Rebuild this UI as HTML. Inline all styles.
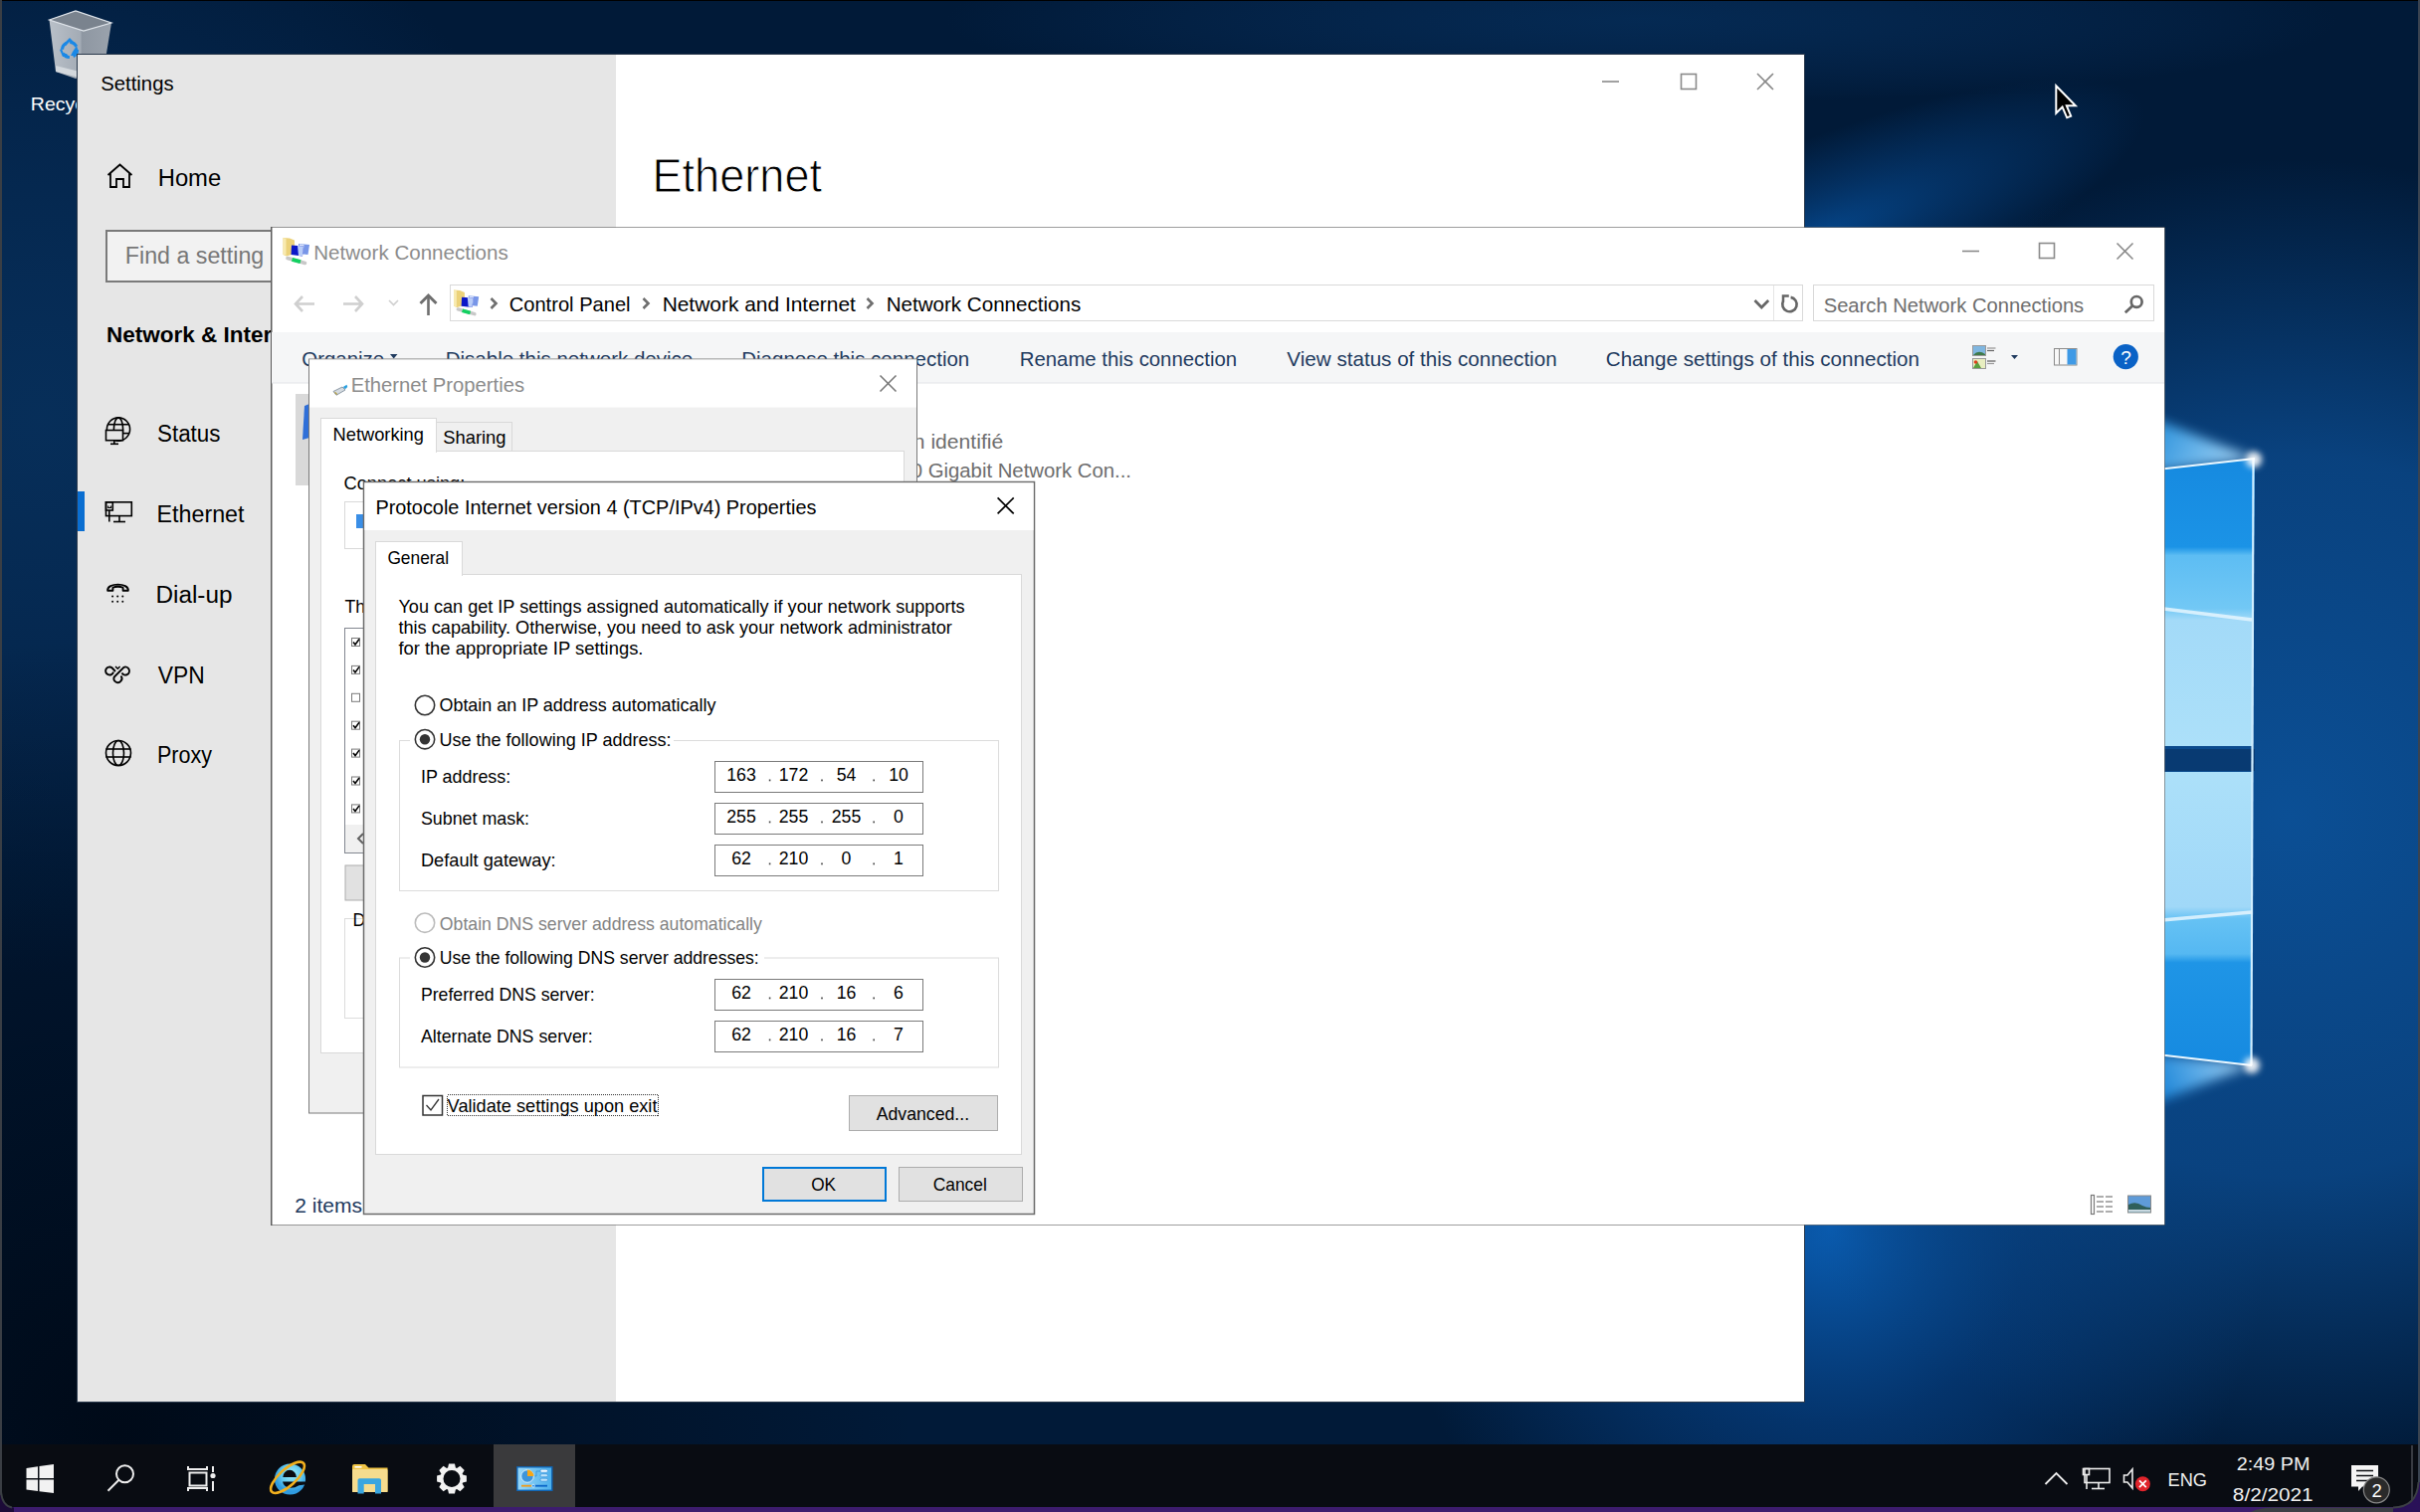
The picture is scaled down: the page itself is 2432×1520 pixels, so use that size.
<!DOCTYPE html>
<html><head><meta charset="utf-8"><title>Network settings</title>
<style>
html,body{margin:0;padding:0;width:2432px;height:1520px;overflow:hidden;background:#011a38;}
svg{position:absolute;left:0;top:0;display:block;}
text{font-family:"Liberation Sans",sans-serif;white-space:pre;}
</style></head><body>
<svg width="2432" height="1520" viewBox="0 0 2432 1520">
<defs>
 <radialGradient id="glow" cx="2300" cy="820" r="660" gradientUnits="userSpaceOnUse">
  <stop offset="0" stop-color="#0b4f95"/>
  <stop offset="0.55" stop-color="#0a4686" stop-opacity="0.9"/>
  <stop offset="1" stop-color="#0a4686" stop-opacity="0"/>
 </radialGradient>
 <radialGradient id="glowB" cx="1840" cy="1235" r="440" gradientUnits="userSpaceOnUse">
  <stop offset="0" stop-color="#0a5db2"/>
  <stop offset="0.45" stop-color="#053a78" stop-opacity="0.8"/>
  <stop offset="1" stop-color="#053a78" stop-opacity="0"/>
 </radialGradient>
 <radialGradient id="glowL" cx="40" cy="420" r="560" gradientUnits="userSpaceOnUse">
  <stop offset="0" stop-color="#08325f" stop-opacity="0.85"/>
  <stop offset="1" stop-color="#0a3c74" stop-opacity="0"/>
 </radialGradient>
 <radialGradient id="darkBL" cx="120" cy="1440" r="800" gradientUnits="userSpaceOnUse">
  <stop offset="0" stop-color="#000a18"/>
  <stop offset="1" stop-color="#000a18" stop-opacity="0"/>
 </radialGradient>
 <radialGradient id="glowT" cx="1650" cy="20" r="700" gradientUnits="userSpaceOnUse" gradientTransform="translate(0,18) scale(1,0.12)">
  <stop offset="0" stop-color="#06305e" stop-opacity="0.7"/>
  <stop offset="1" stop-color="#0b3a70" stop-opacity="0"/>
 </radialGradient>
 <radialGradient id="glowTR" cx="0" cy="0" r="1" gradientUnits="userSpaceOnUse" gradientTransform="translate(1820,240) rotate(-22) scale(360,95)">
  <stop offset="0" stop-color="#05468a"/>
  <stop offset="0.5" stop-color="#053a74" stop-opacity="0.6"/>
  <stop offset="1" stop-color="#053a74" stop-opacity="0"/>
 </radialGradient>
 <linearGradient id="beamTop" x1="2176" y1="420" x2="2266" y2="462" gradientUnits="userSpaceOnUse">
  <stop offset="0" stop-color="#3aa6f0" stop-opacity="0.85"/>
  <stop offset="1" stop-color="#bfe6ff" stop-opacity="0.95"/>
 </linearGradient>
 <linearGradient id="beamBot" x1="2176" y1="1100" x2="2263" y2="1071" gradientUnits="userSpaceOnUse">
  <stop offset="0" stop-color="#2a9cf0" stop-opacity="0.8"/>
  <stop offset="1" stop-color="#bfe6ff" stop-opacity="0.95"/>
 </linearGradient>
 <linearGradient id="paneTop" x1="0" y1="462" x2="0" y2="750" gradientUnits="userSpaceOnUse">
  <stop offset="0" stop-color="#168ae0"/>
  <stop offset="0.305" stop-color="#1b93e6"/>
  <stop offset="0.335" stop-color="#5dbdf3"/>
  <stop offset="0.52" stop-color="#72c8f5"/>
  <stop offset="0.56" stop-color="#a3daf8"/>
  <stop offset="1" stop-color="#ace0f9"/>
 </linearGradient>
 <linearGradient id="paneBot" x1="0" y1="776" x2="0" y2="1071" gradientUnits="userSpaceOnUse">
  <stop offset="0" stop-color="#ace0f9"/>
  <stop offset="0.46" stop-color="#a0d8f8"/>
  <stop offset="0.5" stop-color="#66c2f4"/>
  <stop offset="0.62" stop-color="#55b8f2"/>
  <stop offset="0.65" stop-color="#1f95e6"/>
  <stop offset="1" stop-color="#168ae0"/>
 </linearGradient>
 <filter id="blur6" x="-50%" y="-50%" width="200%" height="200%"><feGaussianBlur stdDeviation="6"/></filter>
 <filter id="blur3" x="-50%" y="-50%" width="200%" height="200%"><feGaussianBlur stdDeviation="3"/></filter>
</defs>

<rect x="0" y="0" width="2432" height="1520" fill="#011a38" />
<rect x="0" y="0" width="2432" height="1520" fill="url(#glowL)" />
<rect x="0" y="0" width="2432" height="1520" fill="url(#glowT)" />
<rect x="0" y="0" width="2432" height="1520" fill="url(#darkBL)" />
<rect x="0" y="0" width="2432" height="1520" fill="url(#glowB)" />
<rect x="0" y="0" width="2432" height="1520" fill="url(#glow)" />
<rect x="0" y="0" width="2432" height="1520" fill="url(#glowTR)" />
<polygon points="2150,415 2266,461 2150,476" fill="url(#beamTop)" filter="url(#blur6)"/>
<polygon points="2150,1058 2263,1071 2150,1115" fill="url(#beamBot)" filter="url(#blur6)"/>
<polygon points="2150,474 2266,461 2263,750 2150,750" fill="url(#paneTop)"/>
<polygon points="2150,776 2263,776 2263,1071 2150,1058" fill="url(#paneBot)"/>
<rect x="2150" y="753" width="116" height="22" fill="#083a72"/>
<line x1="2150" y1="474" x2="2266" y2="461" stroke="#eaf7ff" stroke-width="2.2"/>
<line x1="2264.5" y1="462" x2="2262.5" y2="1071" stroke="#d0eeff" stroke-width="2.2"/>
<line x1="2150" y1="1058" x2="2263" y2="1071" stroke="#eaf7ff" stroke-width="2.2"/>
<line x1="2150" y1="609" x2="2263" y2="623" stroke="#e6f6ff" stroke-width="3.5" opacity="0.85"/>
<line x1="2150" y1="927" x2="2263" y2="917" stroke="#e6f6ff" stroke-width="3.5" opacity="0.85"/>
<circle cx="2265" cy="462" r="8" fill="#ffffff" opacity="0.9" filter="url(#blur3)"/>
<circle cx="2263" cy="1071" r="8" fill="#ffffff" opacity="0.9" filter="url(#blur3)"/>
<defs><linearGradient id="binb" x1="50" y1="0" x2="112" y2="0" gradientUnits="userSpaceOnUse"><stop offset="0" stop-color="#b9c0c8"/><stop offset="0.5" stop-color="#a3abb5"/><stop offset="0.52" stop-color="#8e97a2"/><stop offset="1" stop-color="#9aa2ac"/></linearGradient></defs>
<polygon points="49.5,20 76,11 112,23 104,72 76,79 56,72" fill="url(#binb)"/>
<polygon points="49.5,20 76,11 112,23 84,31" fill="#7a838e" stroke="#dfe4ea" stroke-width="1.2"/>
<polygon points="56,66 84,73 104,66 104,72 84,79 56,72" fill="#d3d8dd"/>
<g fill="#1a88e6"><path d="M64,44 L70,38 L76,44 L72,44 L70,42 L66,46 Z"/><path d="M60,50 L63,57 L69,57 L67,54 L64,54 L62,49 Z"/><path d="M73,52 L77,46 L79,52 L77,51 L74,56 L71,56 Z"/></g>
<circle cx="70" cy="50" r="7.5" fill="none" stroke="#1a88e6" stroke-width="3.2" stroke-dasharray="8 3.8"/>
<text x="30.89" y="111" font-size="18.5" fill="#ffffff" textLength="54.22" lengthAdjust="spacingAndGlyphs" >Recyc</text>
<rect x="77" y="54" width="1737" height="1356" fill="#2b3a4d" />
<rect x="78" y="55" width="541" height="1354" fill="#e6e6e6" />
<rect x="619" y="55" width="1194" height="1354" fill="#ffffff" />
<text x="101.34" y="91.3" font-size="21" fill="#000" textLength="73.22" lengthAdjust="spacingAndGlyphs" >Settings</text>
<g stroke="#8a8a8a" stroke-width="1.6" fill="none"><line x1="1610" y1="82" x2="1627" y2="82"/><rect x="1689.5" y="74.5" width="15" height="15"/><line x1="1766" y1="74" x2="1782" y2="90"/><line x1="1782" y1="74" x2="1766" y2="90"/></g>
<g fill="none" stroke="#000" stroke-width="1.8"><path d="M108.5,176 L120.5,165.5 L132.5,176 M111,173.5 V188 H117 V180 H124 V188 H130 V173.5"/></g>
<text x="158.7" y="186.8" font-size="23.3" fill="#000" textLength="63.5" lengthAdjust="spacingAndGlyphs" >Home</text>
<rect x="107" y="232" width="300" height="51" fill="#f2f2f2" stroke="#7a7a7a" stroke-width="2" />
<text x="125.8" y="264.8" font-size="23" fill="#777" textLength="139.5" lengthAdjust="spacingAndGlyphs" >Find a setting</text>
<text x="106.9" y="344.4" font-size="22.5" fill="#000" font-weight="bold" >Network &amp; Internet</text>
<g fill="none" stroke="#000" stroke-width="1.6"><circle cx="119" cy="431.5" r="11.6"/><ellipse cx="119" cy="431.5" rx="4.6" ry="11.6"/><line x1="108" y1="426.7" x2="130" y2="426.7"/><line x1="123" y1="435.6" x2="130" y2="435.6"/><rect x="106.5" y="432.5" width="17" height="10.2" fill="#e6e6e6"/><line x1="114.8" y1="442.7" x2="114.8" y2="446"/><line x1="111" y1="446.3" x2="119" y2="446.3"/><rect x="106.5" y="504.8" width="25.8" height="13.8"/><rect x="106.5" y="504.8" width="6.8" height="8.2"/><line x1="109.8" y1="513" x2="109.8" y2="524.5"/><path d="M108.8,508.5 V510.5 H111.5 V508.5" stroke-width="1.2"/><line x1="120" y1="519" x2="120" y2="524"/><line x1="114" y1="524.5" x2="126" y2="524.5"/><path d="M108.2,593.8 C107,585.5 130,585.5 128.8,593.8 H123.6 V590.8 C121,589.3 116,589.3 113.4,590.8 V593.8 Z" stroke-width="1.9" stroke-linejoin="round"/><path d="M114,675.5 A4,4 0 1,1 112.5,671.3 L116,675" stroke-width="1.9"/><path d="M122.5,676.5 A4,4 0 1,0 124.5,670.8 L114.8,680.5 A4,4 0 1,0 121.5,679.5" stroke-width="1.9"/><path d="M116,670 L118.3,672.2 L120.6,670" stroke-width="1.5"/><circle cx="119" cy="757" r="12.5"/><ellipse cx="119" cy="757" rx="5.5" ry="12.5"/><line x1="106.5" y1="753" x2="131.5" y2="753"/><line x1="106.5" y1="761" x2="131.5" y2="761"/></g>
<g fill="#000"><circle cx="113.1" cy="599.6" r="1"/><circle cx="118.2" cy="599.6" r="1"/><circle cx="123.3" cy="599.6" r="1"/><circle cx="113.1" cy="604.8" r="1"/><circle cx="118.2" cy="604.8" r="1"/><circle cx="123.3" cy="604.8" r="1"/></g>
<rect x="78" y="494" width="7" height="40" fill="#0a6ed1" />
<text x="158" y="443.8" font-size="23" fill="#000" textLength="63.5" lengthAdjust="spacingAndGlyphs" >Status</text>
<text x="157.5" y="525" font-size="23" fill="#000" textLength="88" lengthAdjust="spacingAndGlyphs" >Ethernet</text>
<text x="156.5" y="605.5" font-size="23" fill="#000" textLength="77" lengthAdjust="spacingAndGlyphs" >Dial-up</text>
<text x="158.7" y="686.5" font-size="23" fill="#000" textLength="47" lengthAdjust="spacingAndGlyphs" >VPN</text>
<text x="158" y="767.3" font-size="23" fill="#000" textLength="55" lengthAdjust="spacingAndGlyphs" >Proxy</text>
<text x="655.5" y="192.6" font-size="48.5" fill="#000" textLength="170.5" lengthAdjust="spacingAndGlyphs" stroke="#fff" stroke-width="0.9">Ethernet</text>
<rect x="272.5" y="228.5" width="1903" height="1003" fill="#ffffff" stroke="rgba(0,0,0,0.38)" stroke-width="1" />
<rect x="272" y="228" width="1.5" height="1004" fill="#5a5a5a" />
<g transform="translate(284.5,239) scale(1.0)"><path d="M0,0 L6.5,0.5 L11.5,2.5 V16 L3.5,18.5 L0,17 Z" fill="#ecd27a"/><path d="M0,0 L3,0.8 V17.5 L0,17 Z" fill="#f8eab0"/><path d="M15.5,6 L26.5,7 L25,17 L15.5,16 Z" fill="#7896e8"/><path d="M16.5,6.5 L21,7 L20,15 L16.5,14.5 Z" fill="#dfe8fb"/><path d="M8.5,7.5 L20.5,8.5 L19.5,18.5 L8,17 Z" fill="#0b18c8"/><path d="M14.5,8 L20.5,8.5 L19.5,18.5 L15.5,18 Z" fill="#b9cdf8"/><path d="M4.5,20.5 L22,25.5" stroke="#c8c8c8" stroke-width="3.6" stroke-linecap="round"/><path d="M9,21.8 L17.5,24.2" stroke="#12d060" stroke-width="4"/></g>
<text x="315.28" y="260.9" font-size="20.3" fill="#8c8c8c" textLength="195.44" lengthAdjust="spacingAndGlyphs" >Network Connections</text>
<g stroke="#8a8a8a" stroke-width="1.6" fill="none"><line x1="1972" y1="252.5" x2="1989" y2="252.5"/><rect x="2049.5" y="244.5" width="15" height="15"/><line x1="2127.5" y1="244.5" x2="2143.5" y2="260.5"/><line x1="2143.5" y1="244.5" x2="2127.5" y2="260.5"/></g>
<g fill="none" stroke="#cfcfcf" stroke-width="2.6"><path d="M297,305.5 H316 M304,298 L297,305.5 L304,313"/><path d="M345,305.5 H364 M357,298 L364,305.5 L357,313"/><path d="M391,302 L395.5,306.5 L400,302" stroke-width="1.6"/></g>
<g fill="none" stroke="#6e6e6e" stroke-width="3"><path d="M430.5,317 V299" stroke-width="2.6"/><path d="M422.5,305 L430.5,297 L438.5,305"/></g>
<rect x="452.5" y="286.5" width="1359" height="36" fill="#ffffff" stroke="#d9d9d9" stroke-width="1" />
<line x1="1782.5" y1="287" x2="1782.5" y2="322" stroke="#e5e5e5"/>
<g transform="translate(456,291.5) scale(0.95)"><path d="M0,0 L6.5,0.5 L11.5,2.5 V16 L3.5,18.5 L0,17 Z" fill="#ecd27a"/><path d="M0,0 L3,0.8 V17.5 L0,17 Z" fill="#f8eab0"/><path d="M15.5,6 L26.5,7 L25,17 L15.5,16 Z" fill="#7896e8"/><path d="M16.5,6.5 L21,7 L20,15 L16.5,14.5 Z" fill="#dfe8fb"/><path d="M8.5,7.5 L20.5,8.5 L19.5,18.5 L8,17 Z" fill="#0b18c8"/><path d="M14.5,8 L20.5,8.5 L19.5,18.5 L15.5,18 Z" fill="#b9cdf8"/><path d="M4.5,20.5 L22,25.5" stroke="#c8c8c8" stroke-width="3.6" stroke-linecap="round"/><path d="M9,21.8 L17.5,24.2" stroke="#12d060" stroke-width="4"/></g>
<g fill="none" stroke="#6e6e6e" stroke-width="2"><path d="M493.5,300 L498.5,305 L493.5,310" stroke-width="2.6"/><path d="M646.5,300 L651.5,305 L646.5,310" stroke-width="2.6"/><path d="M871.5,300 L876.5,305 L871.5,310" stroke-width="2.6"/><path d="M1763.5,302 L1770.3,309 L1777.2,302" stroke="#666" stroke-width="2.7"/></g>
<path d="M1799.6,298.9 A7.2,7.2 0 1,1 1792.2,302.4" fill="none" stroke="#666" stroke-width="2.6"/><path d="M1792,303.2 V297.4 H1797.8" fill="none" stroke="#666" stroke-width="2.5"/>
<text x="511.74" y="312.7" font-size="21" fill="#000" textLength="121.82" lengthAdjust="spacingAndGlyphs" >Control Panel</text>
<text x="665.64" y="312.7" font-size="21" fill="#000" textLength="194.22" lengthAdjust="spacingAndGlyphs" >Network and Internet</text>
<text x="890.64" y="312.7" font-size="21" fill="#000" textLength="195.62" lengthAdjust="spacingAndGlyphs" >Network Connections</text>
<rect x="1822.5" y="286.5" width="342" height="36" fill="#ffffff" stroke="#d9d9d9" stroke-width="1" />
<text x="1832.67" y="314" font-size="20.5" fill="#6d6d6d" textLength="261.56" lengthAdjust="spacingAndGlyphs" >Search Network Connections</text>
<g fill="none" stroke="#666" stroke-width="2.7"><circle cx="2147.2" cy="303.4" r="5.4"/><line x1="2143.3" y1="307.3" x2="2135.8" y2="314.3"/></g>
<rect x="273" y="334" width="1902" height="51" fill="#f5f6f7" />
<line x1="273" y1="385" x2="2175" y2="385" stroke="#e3e5e8"/>
<text x="303.25" y="367.7" font-size="20.8" fill="#1e3a5e" textLength="82.9" lengthAdjust="spacingAndGlyphs" >Organize</text>
<path d="M392,356 L399.5,356 L395.7,360.5 Z" fill="#1e3a5e"/>
<text x="447.75" y="367.7" font-size="20.8" fill="#1e3a5e" textLength="248.5" lengthAdjust="spacingAndGlyphs" >Disable this network device</text>
<text x="745.25" y="367.7" font-size="20.8" fill="#1e3a5e" textLength="229.0" lengthAdjust="spacingAndGlyphs" >Diagnose this connection</text>
<text x="1024.75" y="367.7" font-size="20.8" fill="#1e3a5e" textLength="218.3" lengthAdjust="spacingAndGlyphs" >Rename this connection</text>
<text x="1293.35" y="367.7" font-size="20.8" fill="#1e3a5e" textLength="271.3" lengthAdjust="spacingAndGlyphs" >View status of this connection</text>
<text x="1613.75" y="367.7" font-size="20.8" fill="#1e3a5e" textLength="315.3" lengthAdjust="spacingAndGlyphs" >Change settings of this connection</text>
<g><rect x="1982.5" y="347.5" width="13" height="10" fill="#7fb6e0" stroke="#9a9a9a" stroke-width="1"/><path d="M1983,357 Q1988,351 1995,356 V357 H1983 Z" fill="#3f7a4a"/><rect x="1982.5" y="360.5" width="13" height="10" fill="#e8eec0" stroke="#9a9a9a" stroke-width="1"/><path d="M1983,370 L1987,363 L1991,370 Z" fill="#5aa040"/><circle cx="1985.5" cy="364" r="1.8" fill="#e04020"/><line x1="1997" y1="350" x2="2005.5" y2="350" stroke="#9a9a9a" stroke-width="1.3"/><line x1="1997" y1="352.5" x2="2004" y2="352.5" stroke="#666" stroke-width="1.2"/><line x1="1997" y1="363" x2="2005.5" y2="363" stroke="#666" stroke-width="1.3"/><line x1="1997" y1="365.5" x2="2004" y2="365.5" stroke="#9a9a9a" stroke-width="1.2"/><path d="M2021,357 L2028,357 L2024.5,361 Z" fill="#1e3a5e"/><rect x="2064.5" y="350.5" width="22.5" height="16.5" fill="#f8f8f8" stroke="#8a8a8a"/><rect x="2077.5" y="351" width="9" height="15.5" fill="#3f9ae6"/><line x1="2069.5" y1="351" x2="2069.5" y2="366.5" stroke="#8a8a8a"/><circle cx="2136.3" cy="358.6" r="12.6" fill="#0a62c6"/></g>
<text x="2136.5" y="366" font-size="19" fill="#fff" text-anchor="middle" >?</text>
<rect x="297" y="396" width="14" height="92" fill="#d9d9d9" />
<path d="M306,408 L311,406 L311,440 L304,442 Z" fill="#2f6fd8"/>
<text x="917.77" y="450.5" font-size="20.5" fill="#6d6d6d" textLength="90.46" lengthAdjust="spacingAndGlyphs" >n identifié</text>
<text x="915.77" y="479.5" font-size="20.5" fill="#6d6d6d" textLength="221.26" lengthAdjust="spacingAndGlyphs" >0 Gigabit Network Con...</text>
<text x="296.2" y="1219" font-size="20" fill="#1e3a5e" textLength="67.8" lengthAdjust="spacingAndGlyphs" >2 items</text>
<g stroke="#777" stroke-width="1.2" fill="none"><rect x="2101.5" y="1201.5" width="3" height="19"/><line x1="2107" y1="1203" x2="2114" y2="1203"/><line x1="2116" y1="1203" x2="2123" y2="1203"/><line x1="2107" y1="1208" x2="2114" y2="1208"/><line x1="2116" y1="1208" x2="2123" y2="1208"/><line x1="2107" y1="1213" x2="2114" y2="1213"/><line x1="2116" y1="1213" x2="2123" y2="1213"/><line x1="2107" y1="1218" x2="2114" y2="1218"/><line x1="2116" y1="1218" x2="2123" y2="1218"/></g>
<rect x="2138.5" y="1202" width="23" height="17" fill="#5f9bd8" stroke="#8a8a8a"/><path d="M2139,1211 Q2146,1207 2153,1212 Q2157,1214 2161,1214 V1218.5 H2139 Z" fill="#2f5f5a"/><rect x="2139" y="1216" width="22" height="2.5" fill="#c8d8e0"/>
<rect x="310.5" y="361" width="611" height="758" fill="#f0f0f0" stroke="#7a7a7a" stroke-width="1" />
<rect x="311" y="361.5" width="610" height="48" fill="#ffffff" />
<g transform="translate(335,387.5) scale(0.75)"><path d="M0,8 L12,2 L16,6 L4,13 Z" fill="#d5dbe0" stroke="#6c7c8c" stroke-width="1"/><path d="M2,9 L5,12" stroke="#b8a040" stroke-width="1.5"/><path d="M13,2 L18,-1 L19,2 L16,5 Z" fill="#2aa0e0"/></g>
<text x="352.78" y="393.6" font-size="20.4" fill="#8c8c8c" textLength="174.25" lengthAdjust="spacingAndGlyphs" >Ethernet Properties</text>
<g stroke="#777" stroke-width="1.6"><line x1="884.5" y1="377.5" x2="900.5" y2="393.5"/><line x1="900.5" y1="377.5" x2="884.5" y2="393.5"/></g>
<rect x="322.5" y="453.5" width="586" height="605" fill="#ffffff" stroke="#d9d9d9" stroke-width="1" />
<rect x="438.5" y="424.5" width="76" height="29" fill="#f0f0f0" stroke="#d9d9d9" stroke-width="1" />
<rect x="322.5" y="420.5" width="116" height="34" fill="#ffffff" stroke="#d9d9d9" stroke-width="1" />
<rect x="323" y="452" width="115" height="4" fill="#ffffff" />
<text x="334.54" y="443" font-size="17.7" fill="#000" textLength="91.42" lengthAdjust="spacingAndGlyphs" >Networking</text>
<text x="445.24" y="445.6" font-size="17.7" fill="#000" textLength="63.32" lengthAdjust="spacingAndGlyphs" >Sharing</text>
<text x="345.54" y="491.8" font-size="17.7" fill="#000" textLength="121.82" lengthAdjust="spacingAndGlyphs" >Connect using:</text>
<rect x="346.5" y="504.5" width="540" height="47" fill="#ffffff" stroke="#d9d9d9" stroke-width="1" />
<rect x="358" y="517" width="10" height="14" fill="#3a8ee6"/>
<text x="346.5" y="616.2" font-size="17.7" fill="#000" >This connection uses the following items:</text>
<rect x="346.5" y="631.5" width="540" height="226" fill="#ffffff" stroke="#828790" stroke-width="1" />
<rect x="353.5" y="641.5" width="8" height="8" fill="#ffffff" stroke="#7a7a7a" stroke-width="1" />
<path d="M355,645.5 L357,648.0 L361,642.5" fill="none" stroke="#000" stroke-width="1.6"/>
<rect x="353.5" y="669.4" width="8" height="8" fill="#ffffff" stroke="#7a7a7a" stroke-width="1" />
<path d="M355,673.4 L357,675.9 L361,670.4" fill="none" stroke="#000" stroke-width="1.6"/>
<rect x="353.5" y="697.3" width="8" height="8" fill="#ffffff" stroke="#7a7a7a" stroke-width="1" />
<rect x="353.5" y="725.2" width="8" height="8" fill="#ffffff" stroke="#7a7a7a" stroke-width="1" />
<path d="M355,729.2 L357,731.7 L361,726.2" fill="none" stroke="#000" stroke-width="1.6"/>
<rect x="353.5" y="753.1" width="8" height="8" fill="#ffffff" stroke="#7a7a7a" stroke-width="1" />
<path d="M355,757.1 L357,759.6 L361,754.1" fill="none" stroke="#000" stroke-width="1.6"/>
<rect x="353.5" y="781.0" width="8" height="8" fill="#ffffff" stroke="#7a7a7a" stroke-width="1" />
<path d="M355,785.0 L357,787.5 L361,782.0" fill="none" stroke="#000" stroke-width="1.6"/>
<rect x="353.5" y="808.9" width="8" height="8" fill="#ffffff" stroke="#7a7a7a" stroke-width="1" />
<path d="M355,812.9 L357,815.4 L361,809.9" fill="none" stroke="#000" stroke-width="1.6"/>
<rect x="347" y="829" width="539" height="28" fill="#f0f0f0" />
<path d="M365,838 L360,843 L365,848" fill="none" stroke="#606060" stroke-width="2"/>
<rect x="347" y="870" width="120" height="35" fill="#e1e1e1" stroke="#adadad" stroke-width="1" />
<rect x="346.5" y="923.5" width="540" height="100" fill="none" stroke="#dcdcdc" stroke-width="1" />
<text x="354.5" y="931" font-size="17.7" fill="#000" >Description</text>
<rect x="365.5" y="484.5" width="674" height="736" fill="#f0f0f0" stroke="#6b6b6b" stroke-width="1.5" />
<rect x="366.5" y="485.5" width="672" height="47.5" fill="#ffffff" />
<text x="377.38" y="517" font-size="20.4" fill="#000" textLength="443.05" lengthAdjust="spacingAndGlyphs" >Protocole Internet version 4 (TCP/IPv4) Properties</text>
<g stroke="#000" stroke-width="1.7"><line x1="1002.6" y1="500.4" x2="1018.7" y2="516.4"/><line x1="1018.7" y1="500.4" x2="1002.6" y2="516.4"/></g>
<rect x="377.5" y="577.5" width="649" height="583" fill="#ffffff" stroke="#d9d9d9" stroke-width="1" />
<rect x="377.5" y="544.5" width="87" height="34" fill="#ffffff" stroke="#d9d9d9" stroke-width="1" />
<rect x="378" y="576" width="86" height="3" fill="#ffffff" />
<text x="389.39" y="566.6" font-size="18.5" fill="#000" textLength="61.72" lengthAdjust="spacingAndGlyphs" >General</text>
<text x="400.44" y="616.2" font-size="17.7" fill="#000" textLength="569.12" lengthAdjust="spacingAndGlyphs" >You can get IP settings assigned automatically if your network supports</text>
<text x="400.44" y="637.25" font-size="17.7" fill="#000" textLength="556.42" lengthAdjust="spacingAndGlyphs" >this capability. Otherwise, you need to ask your network administrator</text>
<text x="400.44" y="658.3000000000001" font-size="17.7" fill="#000" textLength="246.02" lengthAdjust="spacingAndGlyphs" >for the appropriate IP settings.</text>
<rect x="401.5" y="744.5" width="602" height="151" fill="none" stroke="#dcdcdc" stroke-width="1" />
<rect x="412" y="736" width="265" height="16" fill="#ffffff" />
<circle cx="427" cy="709" r="9.7" fill="#fff" stroke="#333" stroke-width="1.6"/>
<text x="441.44" y="715.4" font-size="17.7" fill="#000" textLength="278.02" lengthAdjust="spacingAndGlyphs" >Obtain an IP address automatically</text>
<circle cx="427" cy="743.2" r="9.7" fill="#fff" stroke="#333" stroke-width="1.6"/>
<circle cx="427" cy="743.2" r="5.2" fill="#333"/>
<text x="441.44" y="749.7" font-size="17.7" fill="#000" textLength="233.12" lengthAdjust="spacingAndGlyphs" >Use the following IP address:</text>
<rect x="718.5" y="765.5" width="209" height="31" fill="#ffffff" stroke="#7a7a7a" stroke-width="1" />
<text x="422.94" y="787.2" font-size="17.7" fill="#000" textLength="90.32" lengthAdjust="spacingAndGlyphs" >IP address:</text>
<text x="745" y="785.2" font-size="17.7" fill="#000" text-anchor="middle" >163</text>
<text x="797.5" y="785.2" font-size="17.7" fill="#000" text-anchor="middle" >172</text>
<text x="850.5" y="785.2" font-size="17.7" fill="#000" text-anchor="middle" >54</text>
<text x="903" y="785.2" font-size="17.7" fill="#000" text-anchor="middle" >10</text>
<rect x="772.8000000000001" y="783.5" width="1.6" height="1.8" fill="#444" />
<rect x="825.2" y="783.5" width="1.6" height="1.8" fill="#444" />
<rect x="877.4000000000001" y="783.5" width="1.6" height="1.8" fill="#444" />
<rect x="718.5" y="807.5" width="209" height="31" fill="#ffffff" stroke="#7a7a7a" stroke-width="1" />
<text x="422.94" y="829.3" font-size="17.7" fill="#000" textLength="109.12" lengthAdjust="spacingAndGlyphs" >Subnet mask:</text>
<text x="745" y="827.2" font-size="17.7" fill="#000" text-anchor="middle" >255</text>
<text x="797.5" y="827.2" font-size="17.7" fill="#000" text-anchor="middle" >255</text>
<text x="850.5" y="827.2" font-size="17.7" fill="#000" text-anchor="middle" >255</text>
<text x="903" y="827.2" font-size="17.7" fill="#000" text-anchor="middle" >0</text>
<rect x="772.8000000000001" y="825.5" width="1.6" height="1.8" fill="#444" />
<rect x="825.2" y="825.5" width="1.6" height="1.8" fill="#444" />
<rect x="877.4000000000001" y="825.5" width="1.6" height="1.8" fill="#444" />
<rect x="718.5" y="849.5" width="209" height="31" fill="#ffffff" stroke="#7a7a7a" stroke-width="1" />
<text x="422.94" y="871.4" font-size="17.7" fill="#000" textLength="135.62" lengthAdjust="spacingAndGlyphs" >Default gateway:</text>
<text x="745" y="869.2" font-size="17.7" fill="#000" text-anchor="middle" >62</text>
<text x="797.5" y="869.2" font-size="17.7" fill="#000" text-anchor="middle" >210</text>
<text x="850.5" y="869.2" font-size="17.7" fill="#000" text-anchor="middle" >0</text>
<text x="903" y="869.2" font-size="17.7" fill="#000" text-anchor="middle" >1</text>
<rect x="772.8000000000001" y="867.5" width="1.6" height="1.8" fill="#444" />
<rect x="825.2" y="867.5" width="1.6" height="1.8" fill="#444" />
<rect x="877.4000000000001" y="867.5" width="1.6" height="1.8" fill="#444" />
<rect x="401.5" y="963" width="602" height="110" fill="none" stroke="#dcdcdc" stroke-width="1" />
<rect x="412" y="955" width="356" height="16" fill="#ffffff" />
<circle cx="427" cy="927.7" r="9.7" fill="#fff" stroke="#bcbcbc" stroke-width="1.6"/>
<text x="441.84" y="934.8" font-size="17.7" fill="#838383" textLength="324.02" lengthAdjust="spacingAndGlyphs" >Obtain DNS server address automatically</text>
<circle cx="427" cy="962.5" r="9.7" fill="#fff" stroke="#333" stroke-width="1.6"/>
<circle cx="427" cy="962.5" r="5.2" fill="#333"/>
<text x="441.84" y="968.8" font-size="17.7" fill="#000" textLength="320.92" lengthAdjust="spacingAndGlyphs" >Use the following DNS server addresses:</text>
<rect x="718.5" y="984.5" width="209" height="31" fill="#ffffff" stroke="#7a7a7a" stroke-width="1" />
<text x="422.94" y="1005.9" font-size="17.7" fill="#000" textLength="174.72" lengthAdjust="spacingAndGlyphs" >Preferred DNS server:</text>
<text x="745" y="1004.2" font-size="17.7" fill="#000" text-anchor="middle" >62</text>
<text x="797.5" y="1004.2" font-size="17.7" fill="#000" text-anchor="middle" >210</text>
<text x="850.5" y="1004.2" font-size="17.7" fill="#000" text-anchor="middle" >16</text>
<text x="903" y="1004.2" font-size="17.7" fill="#000" text-anchor="middle" >6</text>
<rect x="772.8000000000001" y="1002.5" width="1.6" height="1.8" fill="#444" />
<rect x="825.2" y="1002.5" width="1.6" height="1.8" fill="#444" />
<rect x="877.4000000000001" y="1002.5" width="1.6" height="1.8" fill="#444" />
<rect x="718.5" y="1026.5" width="209" height="31" fill="#ffffff" stroke="#7a7a7a" stroke-width="1" />
<text x="422.94" y="1048.2" font-size="17.7" fill="#000" textLength="172.72" lengthAdjust="spacingAndGlyphs" >Alternate DNS server:</text>
<text x="745" y="1046.2" font-size="17.7" fill="#000" text-anchor="middle" >62</text>
<text x="797.5" y="1046.2" font-size="17.7" fill="#000" text-anchor="middle" >210</text>
<text x="850.5" y="1046.2" font-size="17.7" fill="#000" text-anchor="middle" >16</text>
<text x="903" y="1046.2" font-size="17.7" fill="#000" text-anchor="middle" >7</text>
<rect x="772.8000000000001" y="1044.5" width="1.6" height="1.8" fill="#444" />
<rect x="825.2" y="1044.5" width="1.6" height="1.8" fill="#444" />
<rect x="877.4000000000001" y="1044.5" width="1.6" height="1.8" fill="#444" />
<rect x="425" y="1101.5" width="19.5" height="19.5" fill="#ffffff" stroke="#333" stroke-width="1.5" />
<path d="M428.5,1111 L433,1116 L441,1105" fill="none" stroke="#333" stroke-width="1.3"/>
<rect x="449.5" y="1100.5" width="212" height="21" fill="none" stroke="#333" stroke-width="1" stroke-dasharray="1 1" shape-rendering="crispEdges"/>
<text x="449.64" y="1117.9" font-size="17.7" fill="#000" textLength="210.82" lengthAdjust="spacingAndGlyphs" >Validate settings upon exit</text>
<rect x="853.5" y="1101.5" width="149" height="35" fill="#e1e1e1" stroke="#adadad" stroke-width="1" />
<text x="880.74" y="1125.6" font-size="17.7" fill="#000" textLength="93.32" lengthAdjust="spacingAndGlyphs" >Advanced...</text>
<rect x="767" y="1174" width="123" height="33" fill="#e1e1e1" stroke="#0078d7" stroke-width="2" />
<text x="815.14" y="1196.9" font-size="17.7" fill="#000" textLength="24.92" lengthAdjust="spacingAndGlyphs" >OK</text>
<rect x="903.5" y="1173.5" width="124" height="34" fill="#e1e1e1" stroke="#adadad" stroke-width="1" />
<text x="937.74" y="1196.9" font-size="17.7" fill="#000" textLength="54.02" lengthAdjust="spacingAndGlyphs" >Cancel</text>
<rect x="0" y="1452" width="2432" height="63" fill="#090c12" />
<rect x="0" y="1515" width="2432" height="5" fill="#3d1c6e" />
<rect x="496" y="1452" width="82" height="63" fill="#3a3a3c" />
<g fill="#f2f2f2"><path d="M26.5,1476 L38,1474.3 V1486 H26.5 Z"/><path d="M39.5,1474 L54,1472 V1486 H39.5 Z"/><path d="M26.5,1487.5 H38 V1499 L26.5,1497.5 Z"/><path d="M39.5,1487.5 H54 V1501 L39.5,1499.2 Z"/></g>
<g fill="none" stroke="#eee" stroke-width="2"><circle cx="125.5" cy="1481.7" r="8.5"/><line x1="119.5" y1="1487.7" x2="108.5" y2="1498.7"/></g>
<g fill="none" stroke="#eee" stroke-width="2"><path d="M189,1474 V1477 H208 V1474 M189,1499 V1496 H208 V1499"/><rect x="190.5" y="1480.5" width="17" height="13"/><line x1="214" y1="1474" x2="214" y2="1480"/><line x1="214" y1="1489" x2="214" y2="1499"/></g><circle cx="214" cy="1483.5" r="2.6" fill="#eee"/>
<defs><radialGradient id="ieg" cx="293" cy="1482" r="17" gradientUnits="userSpaceOnUse"><stop offset="0" stop-color="#9ef0fb"/><stop offset="0.6" stop-color="#62c8ef"/><stop offset="1" stop-color="#2f9be0"/></radialGradient></defs>
<g><circle cx="291.5" cy="1487" r="15.6" fill="url(#ieg)"/><path d="M284.3,1485 A6.8,7.2 0 0,1 297.9,1485 Z" fill="#0a0c11"/><path d="M284,1489.6 L308,1489.6 L308,1492.3 L300.5,1493.2 Q296,1496.2 291,1495.8 Q285.2,1495 284,1489.6 Z" fill="#0a0c11"/><ellipse cx="289" cy="1485.3" rx="21.5" ry="8.3" transform="rotate(-42 289 1485.3)" fill="none" stroke="#f2b01e" stroke-width="2.6"/></g>
<g><path d="M354,1474 Q354,1472 356,1472 H367 L370.5,1475.5 H389.5 V1500 H354 Z" fill="#f0c445"/><rect x="354" y="1477" width="35.5" height="23" rx="1" fill="#f6dc8e"/><rect x="356.5" y="1474" width="7" height="1.6" fill="#fff"/><path d="M359.5,1501.5 V1488 Q359.5,1486.3 361.5,1486.3 H381 Q383,1486.3 383,1488 V1501.5 H377 V1492 H365.7 V1501.5 Z" fill="#3aa6e0"/></g>
<path d="M468.9,1483.5 L468.9,1489.5 L465.1,1490.4 L464.6,1491.6 L466.7,1494.9 L462.4,1499.2 L459.1,1497.1 L457.9,1497.6 L457.0,1501.4 L451.0,1501.4 L450.1,1497.6 L448.9,1497.1 L445.6,1499.2 L441.3,1494.9 L443.4,1491.6 L442.9,1490.4 L439.1,1489.5 L439.1,1483.5 L442.9,1482.6 L443.4,1481.4 L441.3,1478.1 L445.6,1473.8 L448.9,1475.9 L450.1,1475.4 L451.0,1471.6 L457.0,1471.6 L457.9,1475.4 L459.1,1475.9 L462.4,1473.8 L466.7,1478.1 L464.6,1481.4 L465.1,1482.6 Z M462.5,1486.5 A8.5,8.5 0 1,0 445.5,1486.5 A8.5,8.5 0 1,0 462.5,1486.5 Z" fill="#f2f2f2" fill-rule="evenodd"/>
<defs><linearGradient id="cpg" x1="520" y1="0" x2="555" y2="0" gradientUnits="userSpaceOnUse"><stop offset="0" stop-color="#9ad8f8"/><stop offset="1" stop-color="#4aafec"/></linearGradient></defs>
<g><rect x="519.8" y="1474.8" width="35" height="23.5" fill="url(#cpg)" stroke="#0e64b4" stroke-width="1.4"/><circle cx="530" cy="1484" r="6.3" fill="#3d95db" stroke="#e8f6ff" stroke-width="0.9"/><path d="M530,1484 V1477.5 A6.5,6.5 0 0,1 536.5,1484 Z" fill="#f5a71a"/><rect x="543" y="1477.2" width="7.5" height="3" rx="1.5" fill="#f4fbff" stroke="#2c8ad6" stroke-width="0.6"/><rect x="543" y="1481.7" width="7.5" height="3" rx="1.5" fill="#bfe4fa" stroke="#2c8ad6" stroke-width="0.6"/><rect x="543" y="1486.2" width="7.5" height="3" rx="1.5" fill="#bfe4fa" stroke="#2c8ad6" stroke-width="0.6"/><path d="M537.5,1484 H539 V1479 H543" fill="none" stroke="#2c8ad6" stroke-width="0.7"/><rect x="524" y="1492.8" width="10.5" height="1.8" fill="#f09c1c"/><rect x="536.5" y="1492.8" width="13.5" height="1.8" fill="#0a66c8"/><circle cx="536" cy="1493.7" r="1.5" fill="#2a9af0" stroke="#fff" stroke-width="0.6"/></g>
<path d="M2055.5,1492 L2066.5,1481 L2077.5,1492" fill="none" stroke="#eee" stroke-width="1.8"/>
<g fill="none" stroke="#eee" stroke-width="1.6"><rect x="2095" y="1476.5" width="25" height="14"/><rect x="2093.5" y="1476.5" width="6" height="6"/><line x1="2097" y1="1482" x2="2097" y2="1497"/><line x1="2109" y1="1490" x2="2109" y2="1496"/><line x1="2102" y1="1496.5" x2="2115" y2="1496.5"/><path d="M2134.5,1483 H2138 L2143,1477 V1496 L2138,1490 H2134.5 Z"/></g>
<circle cx="2153.4" cy="1491.8" r="7.5" fill="#e0242b"/><path d="M2150,1488.4 L2156.8,1495.2 M2156.8,1488.4 L2150,1495.2" stroke="#fff" stroke-width="1.7"/>
<text x="2178.49" y="1493.7" font-size="18.5" fill="#f0f0f0" textLength="39.52" lengthAdjust="spacingAndGlyphs" >ENG</text>
<text x="2247.86" y="1478.3" font-size="19" fill="#f0f0f0" textLength="73.58" lengthAdjust="spacingAndGlyphs" >2:49 PM</text>
<text x="2243.86" y="1509.1" font-size="19" fill="#f0f0f0" textLength="80.78" lengthAdjust="spacingAndGlyphs" >8/2/2021</text>
<path d="M2363,1473 H2390 V1494.5 H2374 L2370,1499 V1494.5 H2363 Z" fill="#f5f5f5"/><g stroke="#0b0c10" stroke-width="1.5"><line x1="2368" y1="1478.5" x2="2385" y2="1478.5"/><line x1="2368" y1="1483.5" x2="2385" y2="1483.5"/><line x1="2368" y1="1488.5" x2="2380" y2="1488.5"/></g>
<circle cx="2388.3" cy="1497.8" r="13" fill="#2a2a2a" stroke="#888" stroke-width="1.2"/>
<text x="2388.6" y="1504.5" font-size="18.5" fill="#fff" text-anchor="middle" >2</text>
<line x1="2424" y1="1453" x2="2424" y2="1514" stroke="#5a5d63" stroke-width="1.2"/>
<path d="M2066.3,86.3 V113.8 L2072.6,107.6 L2077.2,118.3 L2081.2,116.6 L2076.8,106.2 H2085.8 Z" fill="#000" stroke="#fff" stroke-width="2" stroke-linejoin="miter"/>
<rect x="0" y="0" width="2432" height="1" fill="#000" />
<rect x="0" y="0" width="2" height="1503" fill="#3a3e44" />
<rect x="2430" y="0" width="2" height="1495" fill="#3a4350" />
<path d="M0,1500 L0,1520 L14,1520 L14,1515.5 Q2,1515.5 0,1500 Z" fill="#1c0b38"/>
<path d="M1,1500 Q2.5,1514 12,1515.5" fill="none" stroke="#3a3e44" stroke-width="2"/>
<path d="M2262,1520 Q2270,1515.5 2285,1515.5 L2432,1515.5 L2432,1520 Z" fill="#3c3f45"/>
<path d="M2432,1490 L2432,1520 L2405,1520 L2405,1515.5 Q2429,1515 2431,1490 Z" fill="#2a1158"/>
<path d="M2405,1515.5 Q2429,1515 2430.5,1490" fill="none" stroke="#3c3f45" stroke-width="2"/>
</svg></body></html>
